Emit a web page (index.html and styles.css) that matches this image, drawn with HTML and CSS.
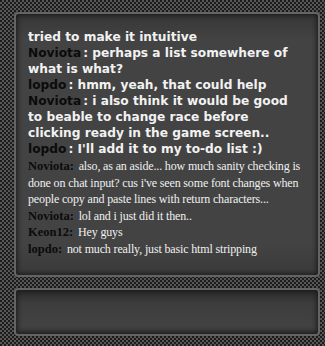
FILE: index.html
```html
<!DOCTYPE html>
<html>
<head>
<meta charset="utf-8">
<link rel="stylesheet" href="styles.css">
</head>
<body>
<div class="page">
  <div class="panel chat">
    <div class="msgs-bold">
      <p>tried to make it intuitive</p>
      <p><span class="nm">Noviota</span><span>: perhaps a list somewhere of what is what?</span></p>
      <p><span class="nm">lopdo</span><span>: hmm, yeah, that could help</span></p>
      <p><span class="nm">Noviota</span><span>: i also think it would be good to beable to change race before clicking ready in the game screen..</span></p>
      <p><span class="nm">lopdo</span><span>: I'll add it to my to-do list :)</span></p>
    </div>
    <div class="msgs-serif">
      <p><b class="sn">Noviota:</b> also, as an aside... how much sanity checking is done on chat input? cus i've seen some font changes when people copy and paste lines with return characters...</p>
      <p><b class="sn">Noviota:</b> lol and i just did it then..</p>
      <p><b class="sn">Keon12:</b> Hey guys</p>
      <p><b class="sn">lopdo:</b> not much really, just basic html stripping</p>
    </div>
  </div>
  <div class="panel input"></div>
</div>
</body>
</html>
```
FILE: styles.css
```css
html, body {
  margin: 0;
  padding: 0;
}
body {
  width: 325px;
  height: 346px;
  overflow: hidden;
  background-color: #2a2a2a;
  background-image: repeating-conic-gradient(#575757 0 25%, #1c1c1c 0 50%);
  background-size: 4px 4px;
}
.page {
  padding: 12px 5px 0 14px;
  display: flex;
  flex-direction: column;
  gap: 11px;
}
.panel {
  box-sizing: border-box;
  width: 306px;
  border: 2px solid #646464;
  border-radius: 4px;
  background: linear-gradient(#363636, #434343 10%, #434343 88%, #3a3a3a);
  box-shadow: inset 0 0 5px 1px #181818, 0 0 1px #000;
}
.chat {
  height: 265px;
  padding: 15px 8px 0 12px;
}
.input {
  height: 48px;
  background: linear-gradient(#2a2a2a, #3d3d3d 30%, #424242 80%, #383838);
}
p { margin: 0; }
.msgs-bold {
  padding-right: 10px;
  font-family: "DejaVu Sans", sans-serif;
  font-weight: bold;
  font-size: 12.2px;
  line-height: 16px;
  color: #f2f2f2;
}
.nm {
  color: #0b0b0b;
  margin-right: 2px;
}
.msgs-serif {
  margin-top: 1px;
  padding-right: 4px;
  font-family: "Liberation Serif", serif;
  font-size: 12px;
  letter-spacing: -0.15px;
  line-height: 16.6px;
  color: #f0f0f0;
}
.sn {
  color: #0b0b0b;
  font-size: 12.5px;
  line-height: 16px;
  letter-spacing: 0;
  margin-right: 2px;
}
```
